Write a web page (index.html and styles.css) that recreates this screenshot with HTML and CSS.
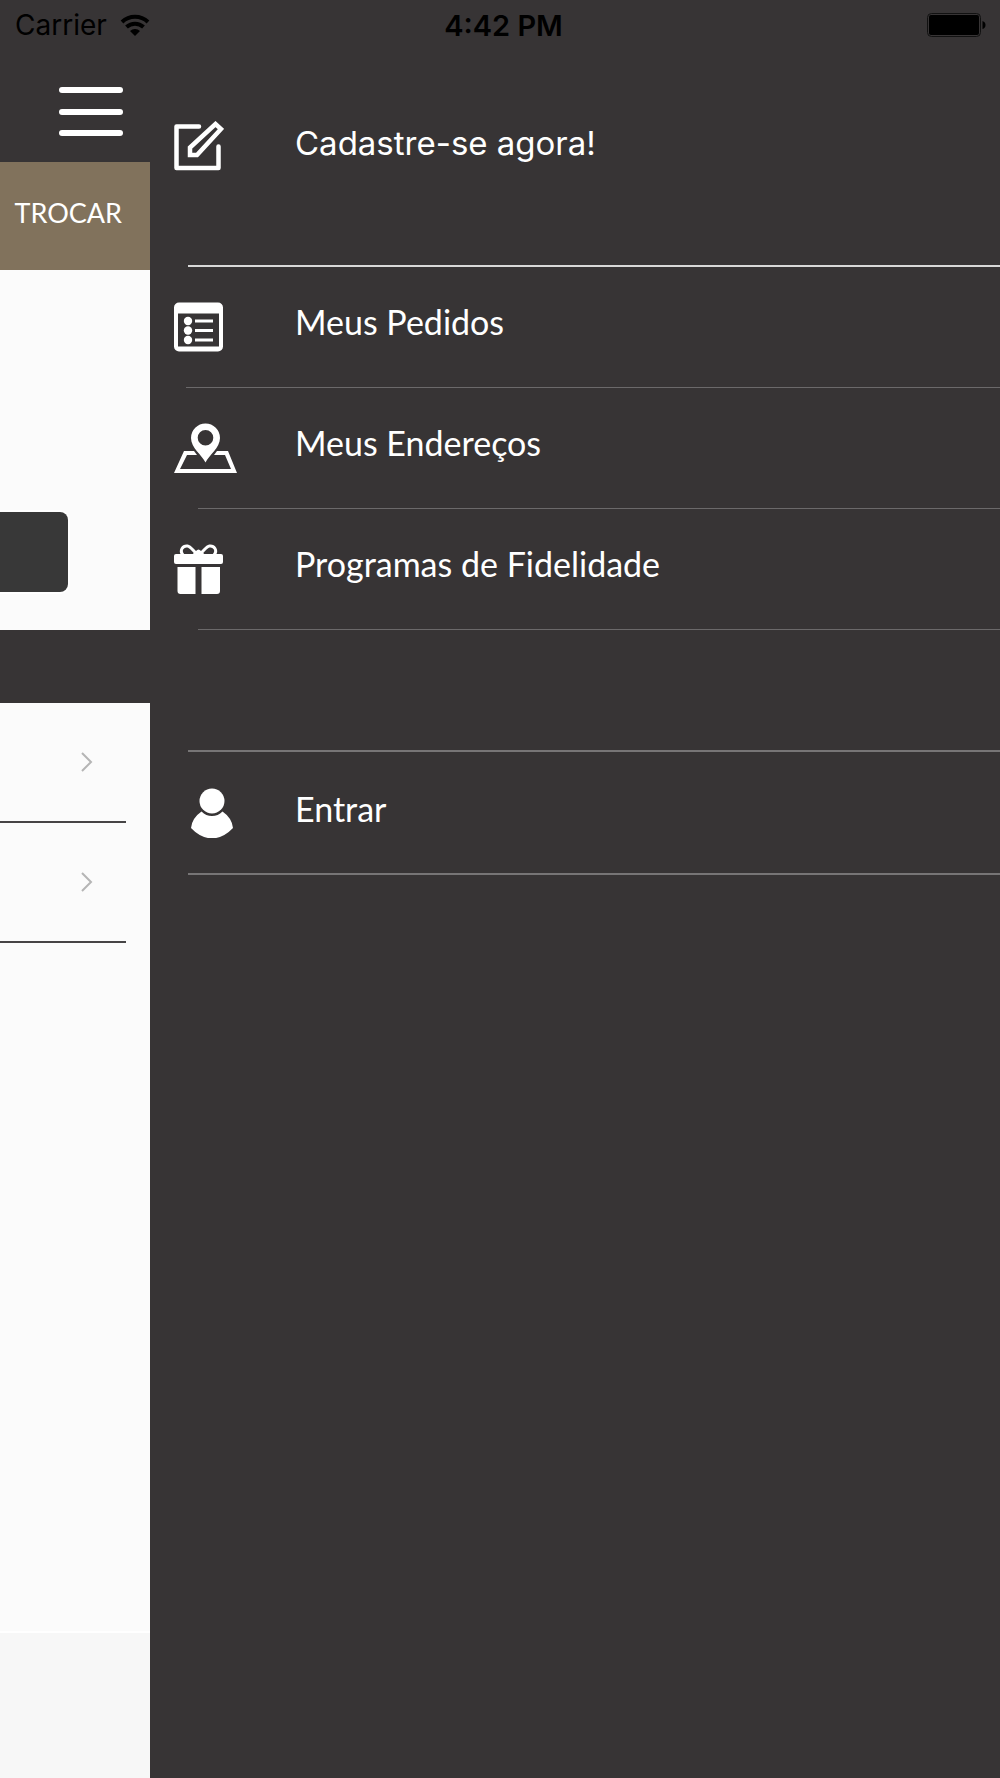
FILE: index.html
```html
<!DOCTYPE html>
<html lang="pt-BR">
<head>
    <meta charset="UTF-8">
    <meta name="viewport" content="width=device-width, initial-scale=1.0">
    <title>Menu</title>
    <link rel="stylesheet" href="styles.css">
</head>
<body>
    <header class="status-bar">
        <div class="carrier">
            <span>Carrier</span>
            <svg width="30" height="22" viewBox="0 0 30 22" fill="none" stroke="#000" stroke-width="4">
                <path d="M2 8a19 19 0 0 1 26 0"/>
                <path d="M6.500 13a12.500 12.500 0 0 1 17 0"/>
                <path d="M15 22l-5-5a7.500 7.500 0 0 1 10 0z" fill="#000" stroke="none"/>
            </svg>
        </div>
        <span class="time">4:42 PM</span>
        <svg class="battery" width="59" height="24" viewBox="0 0 59 24">
            <rect x="0.500" y="0.500" width="53" height="23" rx="4" fill="none" stroke="#111"/>
            <rect x="2" y="2" width="50" height="20" rx="2"/>
            <path d="M55.500 8q3 1 3 4t-3 4z"/>
        </svg>
    </header>

    <div class="layout">
        <!-- Visible edge of the page behind the drawer -->
        <main class="page">
            <div class="toolbar">
                <button class="menu-button" type="button" aria-label="Menu">
                    <span></span>
                    <span></span>
                    <span></span>
                </button>
            </div>
            <button class="change-button" type="button">TROCAR</button>
            <section class="panel">
                <button class="dark-button" type="button" aria-label="Continuar"></button>
            </section>
            <div class="band"></div>
            <section class="options">
                <a class="option" href="#" aria-label="Abrir">
                    <svg width="14" height="22" viewBox="0 0 14 22" fill="none" stroke="#b5b5b5" stroke-width="2"><path d="M2 2l9 9-9 9"/></svg>
                </a>
                <a class="option" href="#" aria-label="Abrir">
                    <svg width="14" height="22" viewBox="0 0 14 22" fill="none" stroke="#b5b5b5" stroke-width="2"><path d="M2 2l9 9-9 9"/></svg>
                </a>
            </section>
            <div class="bottom-bar"></div>
        </main>

        <nav class="drawer">
            <a class="item signup" href="#">
                <span class="icon">
                    <svg width="50" height="50" viewBox="0 0 50 50" fill="none" stroke="#fff" stroke-width="4.500" stroke-linecap="round" stroke-linejoin="round">
                        <path d="M25 5.500H2.500v41.500h42V25.500"/>
                        <path d="M16 34v-7.500L41.500 3l5.500 5L23 34z" stroke-linejoin="miter"/>
                    </svg>
                </span>
                <span class="label">Cadastre-se agora!</span>
            </a>
            <a class="item" href="#">
                <span class="icon">
                    <svg width="50" height="50" viewBox="0 0 50 50" fill="#fff">
                        <path fill-rule="evenodd" d="M5 0.500h39a5 5 0 0 1 5 5v39a5 5 0 0 1-5 5H5a5 5 0 0 1-5-5v-39a5 5 0 0 1 5-5zM4 11.500v33h41v-33z"/>
                        <circle cx="14" cy="19" r="4.200"/>
                        <circle cx="14" cy="28.500" r="4.200"/>
                        <circle cx="14" cy="38" r="4.200"/>
                        <path d="M21 17.500h18v3H21zM21 27h18v3H21zM21 36.500h18v3H21z"/>
                    </svg>
                </span>
                <span class="label">Meus Pedidos</span>
            </a>
            <a class="item inset" href="#">
                <span class="icon">
                    <svg width="63" height="50" viewBox="0 0 63 50" fill="#fff">
                        <path fill-rule="evenodd" d="M31.500 39.500C28 32 17 25 17 15a14.500 14.500 0 0 1 29 0c0 10-11 17-14.500 24.500zM31.500 7a7.800 7.800 0 1 0 0 15.600 7.800 7.800 0 0 0 0-15.600z"/>
                        <path d="M20 28l3 4H13L6 46h51l-6-14H40l3-4h11l9 22H0l10-22z"/>
                    </svg>
                </span>
                <span class="label">Meus Endereços</span>
            </a>
            <a class="item inset" href="#">
                <span class="icon">
                    <svg width="50" height="50" viewBox="0 0 50 50" fill="#fff">
                        <rect x="0" y="10" width="49" height="10" rx="2"/>
                        <path d="M3.500 23h18v27h-15a3 3 0 0 1-3-3zM27.500 23H46v24a3 3 0 0 1-3 3H27.500z"/>
                        <path d="M9 11C5 6 9 1.500 13.500 2c3 0.500 5 4 9 7.500M40 11c4-5 0-9.500-4.500-9-3 0.500-5 4-9 7.500" fill="none" stroke="#fff" stroke-width="3"/>
                        <path d="M19 11q0-3 3-4 2.500-3 5 0 3 1 3 4z"/>
                    </svg>
                </span>
                <span class="label">Programas de Fidelidade</span>
            </a>
            <div class="spacer"></div>
            <a class="item login" href="#">
                <span class="icon">
                    <svg width="42" height="50" viewBox="0 0 42 50" fill="#fff">
                        <circle cx="21" cy="13" r="12.500"/>
                        <path d="M10.500 23.500q4.500 4.500 10.500 4.500t10.500-4.500Q41 30 42 40 32.500 50 21 50.500 9.500 50 0 40q1-10 10.500-16.500z"/>
                    </svg>
                </span>
                <span class="label">Entrar</span>
            </a>
        </nav>
    </div>
</body>
</html>
```
FILE: styles.css
```css
* {
    box-sizing: border-box;
}
body {
    margin: 0;
    min-height: 100vh;
    display: flex;
    flex-direction: column;
    background-color: #373435;
    color: white;
    font-family: Lato, sans-serif;
}
a {
    color: inherit;
    text-decoration: none;
}
button {
    border: 0;
    padding: 0;
    color: inherit;
    font-family: inherit;
}
svg {
    display: block;
}

/* Status bar */
.status-bar {
    display: grid;
    grid-template-columns: 1fr auto 1fr;
    align-items: center;
    height: 50px;
    padding: 0 14px 0 15px;
    color: black;
    font-family: Inter, sans-serif;
    font-size: 28px;
}
.carrier {
    display: flex;
    align-items: center;
    gap: 13px;
}
.time {
    padding-left: 6px;
    font-size: 29px;
    font-weight: 600;
}
.battery {
    justify-self: end;
}

.layout {
    flex: 1;
    display: flex;
}

/* Page behind the drawer */
.page {
    flex: 0 0 15%;
    display: flex;
    flex-direction: column;
}
.toolbar {
    display: flex;
    justify-content: flex-end;
    height: 112px;
    padding: 37px 27px 0 0;
}
.menu-button {
    display: flex;
    flex-direction: column;
    justify-content: space-between;
    width: 64px;
    height: 49px;
    background: none;
}
.menu-button span {
    height: 6px;
    border-radius: 3px;
    background-color: white;
}
.change-button {
    height: 108px;
    padding: 0 28px 8px 0;
    background-color: #81725c;
    font-size: 27px;
    text-align: right;
}
.panel {
    display: flex;
    align-items: flex-end;
    height: 360px;
    padding: 0 82px 38px 0;
    background-color: #fbfbfb;
}
.dark-button {
    flex: 1;
    height: 80px;
    border-radius: 0 8px 8px 0;
    background-color: #383838;
    box-shadow: 0 0 0 2px white;
}
.band {
    height: 73px;
}
.options {
    flex: 1;
    background-color: #fbfbfb;
}
.option {
    display: flex;
    justify-content: flex-end;
    align-items: center;
    height: 120px;
    margin-right: 24px;
    padding-right: 32px;
    border-bottom: 2px solid #464445;
}
.bottom-bar {
    height: 147px;
    border-top: 2px solid white;
    background-color: #f7f7f7;
}

/* Drawer */
.drawer {
    flex: 1;
    display: flex;
    flex-direction: column;
}
.item {
    display: grid;
    grid-template-columns: 121px 1fr;
    grid-template-rows: 1fr auto;
    align-items: center;
    height: 121px;
    padding-left: 24px;
    font-size: 34px;
}
.item::after {
    content: "";
    grid-column: 1 / -1;
    height: 1px;
    margin-left: 12px;
    background-color: #6b696a;
}
.inset::after {
    margin-left: 24px;
}
.label {
    padding-bottom: 12px;
}
.signup {
    height: 217px;
    font-family: Inter, sans-serif;
    font-size: 33px;
}
.signup .icon {
    padding-bottom: 24px;
}
.signup .label {
    padding-bottom: 30px;
}
.signup::after,
.login::after {
    height: 2px;
    margin-left: 14px;
}
.signup::after {
    background-color: #d8d8d8;
}
.login::after {
    background-color: #777576;
}
.spacer {
    height: 122px;
    margin-left: 38px;
    border-bottom: 2px solid #777576;
}
.login {
    height: 123px;
}
.login .icon {
    padding-left: 17px;
}
.login .label {
    padding-bottom: 8px;
}
```
